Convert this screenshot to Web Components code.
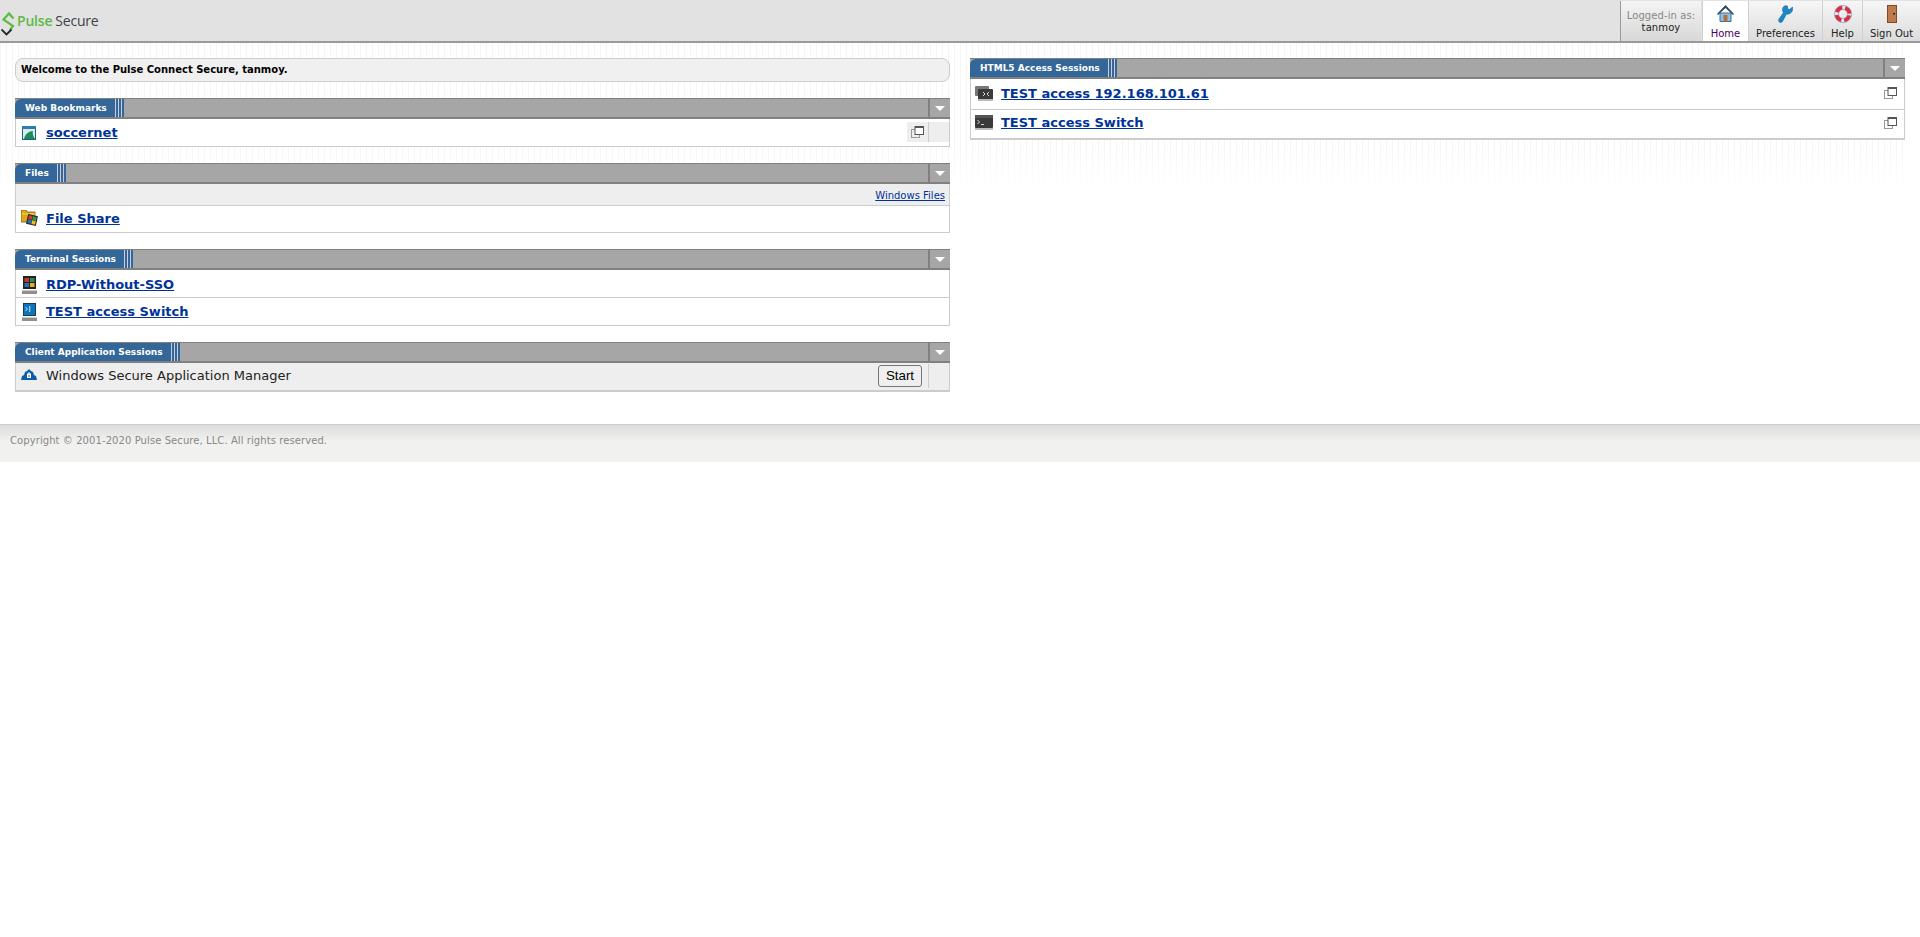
<!DOCTYPE html>
<html>
<head>
<meta charset="utf-8">
<title>Pulse Connect Secure</title>
<style>
  html, body { margin: 0; padding: 0; background: #fff; }
  body { font-family: "DejaVu Sans", Verdana, sans-serif; }
</style>
</head>
<body>
<ps-header user="tanmoy"></ps-header>
<ps-main>
  <div slot="left">
    <ps-welcome>Welcome to the Pulse Connect Secure, tanmoy.</ps-welcome>
    <ps-panel title="Web Bookmarks">
      <ps-row icon="web" label="soccernet" copy="cell" lift="0"></ps-row>
    </ps-panel>
    <ps-panel title="Files">
      <ps-subrow>Windows Files</ps-subrow>
      <ps-row icon="folder" label="File Share" height="27" lift="2"></ps-row>
    </ps-panel>
    <ps-panel title="Terminal Sessions">
      <ps-row icon="rdp" label="RDP-Without-SSO" lift="-2"></ps-row>
      <ps-row icon="term" label="TEST access Switch" lift="0"></ps-row>
    </ps-panel>
    <ps-panel title="Client Application Sessions" thick>
      <ps-app-row icon="wsam" label="Windows Secure Application Manager"></ps-app-row>
    </ps-panel>
  </div>
  <div slot="right">
    <ps-panel title="HTML5 Access Sessions" thick>
      <ps-row icon="vnc" label="TEST access 192.168.101.61" copy="plain" height="31" lift="2"></ps-row>
      <ps-row icon="shell" label="TEST access Switch" copy="plain" height="29" lift="4"></ps-row>
    </ps-panel>
  </div>
</ps-main>
<ps-footer>Copyright © 2001-2020 Pulse Secure, LLC. All rights reserved.</ps-footer>

<script>
// small inline drawings, keyed by name
const ICONS = {
  web: `<svg width="14" height="14" viewBox="0 0 14 14"><rect width="14" height="14" fill="#1f5f7f"/><rect width="14" height="3" fill="#2a7fb0"/><rect x="1" y="3" width="12" height="10" fill="#d8ecf0"/><path d="M2 13c1-5 5-8 9-8-1 3 1 6 2 8z" fill="#1e8a5a"/></svg>`,
  folder: `<svg width="17" height="16" viewBox="0 0 17 16"><path d="M0 0h5l1 2h8v10H2L0 12z" fill="#e0a818" stroke="#7a5a10" stroke-width=".8"/><path d="M1 4h13" stroke="#f4d870"/><g transform="rotate(12 11 10)"><rect x="6" y="5" width="10" height="10" fill="#222"/><rect x="7" y="6" width="3.800" height="3.800" fill="#c8402a"/><rect x="11.200" y="6" width="3.800" height="3.800" fill="#2c9a50"/><rect x="7" y="10.200" width="3.800" height="3.800" fill="#2a70c0"/><rect x="11.200" y="10.200" width="3.800" height="3.800" fill="#e8c020"/></g></svg>`,
  rdp: `<svg width="15" height="18" viewBox="0 0 15 18"><rect x="1" y="0" width="13" height="13" fill="#222"/><rect x="2.500" y="2" width="4.500" height="4" fill="#c03a2a"/><rect x="8" y="2" width="4.500" height="4" fill="#2c8a50"/><rect x="2.500" y="7" width="4.500" height="4" fill="#2a70b0"/><rect x="8" y="7" width="4.500" height="4" fill="#e0b020"/><rect x="0" y="14" width="15" height="4" fill="#8f8f8f"/><rect x="0" y="14" width="15" height="1" fill="#ccc"/></svg>`,
  term: `<svg width="15" height="18" viewBox="0 0 15 18"><rect x="1" y="0" width="13" height="13" fill="#1a3a50"/><rect x="2" y="1" width="11" height="11" fill="#0d74c0"/><path d="M3.500 4l2 2-2 2M7 3.500h.8v5H7" fill="none" stroke="#fff" stroke-width=".8"/><rect x="0" y="14" width="15" height="4" fill="#8f8f8f"/><rect x="0" y="14" width="15" height="1" fill="#ccc"/></svg>`,
  wsam: `<svg width="16" height="11" viewBox="0 0 16 11"><path d="M0 11l1-4 2-1 1-3 2-1 2-2 2 2 2 1 1 3 2 1 1 4z" fill="#0d5ea8"/><rect x="6" y="5" width="4" height="4" fill="#fff"/><path d="M7 5V4h2v1" fill="none" stroke="#fff"/><rect x="7.500" y="6" width="1" height="2" fill="#0d5ea8"/></svg>`,
  vnc: `<svg width="18" height="15" viewBox="0 0 18 15"><rect x="0" y="0" width="14" height="10" rx="1" fill="#777"/><rect x="3" y="3" width="15" height="11" rx="1" fill="#3a3a3a"/><rect x="3" y="13" width="15" height="2" fill="#bbb"/><path d="M8 10l2-2-2-2M14 6l-2 2 2 2" fill="none" stroke="#fff" stroke-width=".8"/></svg>`,
  shell: `<svg width="18" height="15" viewBox="0 0 18 15"><rect width="18" height="13" rx="1" fill="#3a3a3a"/><rect width="18" height="3" fill="#555"/><rect y="13" width="18" height="2" fill="#bbb"/><path d="M2.500 5l2 2-2 2M6 9.500h3" fill="none" stroke="#fff" stroke-width=".8"/></svg>`,
  copy: `<svg width="13" height="12" viewBox="0 0 13 12"><rect x=".5" y="3.500" width="8" height="8" fill="none" stroke="#999"/><rect x="4" y=".5" width="8.500" height="8" fill="#fff" stroke="#555"/><rect x="4" y="0" width="9" height="2" fill="#555"/></svg>`,
  home: `<svg width="17" height="17" viewBox="0 0 17 17"><path d="M3 8h11v8.500H3z" fill="#8fc0e4" stroke="#38709c"/><rect x="6.500" y="10" width="4" height="6.500" fill="#b86e38"/><path d="M0 9l8.500-9L17 9l-1 1-7.500-7L1 10z" fill="#2d4a62"/></svg>`,
  prefs: `<svg width="15" height="18" viewBox="0 0 15 18"><path d="M14.500 2l-3 2.500-2-1V1c-3-1-5 1-5 3.500 0 1 0 2 1 3L1 14c-1 2 0 3.500 1.500 3.500 1 0 2-.5 2.500-2l3.500-6.500c3.500 1 7-2.500 6-7z" fill="#1b86c8" stroke="#0f5f96" stroke-width=".5"/></svg>`,
  help: `<svg width="18" height="18" viewBox="0 0 18 18"><circle cx="9" cy="9" r="6.500" fill="none" stroke="#e4e6f2" stroke-width="4"/><circle cx="9" cy="9" r="6.500" fill="none" stroke="#dc2e3c" stroke-width="4" stroke-dasharray="7.200 3" stroke-dashoffset="-1.500"/><circle cx="9" cy="9" r="8.600" fill="none" stroke="#8f9ac0" stroke-width=".7"/><circle cx="9" cy="9" r="4.400" fill="none" stroke="#8f9ac0" stroke-width=".7"/></svg>`,
  door: `<svg width="10" height="18" viewBox="0 0 10 18"><rect x=".5" y=".5" width="9" height="17" fill="#bd7a4c" stroke="#7f4a28"/><rect x="6" y="8" width="2" height="1.500" fill="#222"/></svg>`
};

class PsHeader extends HTMLElement {
  constructor() {
    super();
    this.attachShadow({ mode: 'open' });
    this.shadowRoot.innerHTML = `
      <style>
        :host { display: flex; justify-content: space-between; height: 41px; background: #e2e2e2; border-bottom: 2px solid #999; font-family: "DejaVu Sans", Verdana, sans-serif; }
        .logo { display: flex; align-items: center; padding-left: 1px; gap: 2px; font-family: "Open Sans", sans-serif; font-size: 14px; letter-spacing: -.2px; }
        .logo b { font-weight: 600; color: #5fb946; margin-right: 3px; }
        .logo span { color: #3c4448; }
        nav { display: flex; }
        .who { width: 81px; margin: 1px 1px 0 0; padding-top: 9px; box-sizing: border-box; border-left: 1px solid #999; background: linear-gradient(#f4f4f4, #d8d8d8); text-align: center; font-size: 10px; line-height: 12px; letter-spacing: .1px; color: #888; }
        .who div { color: #222; }
      </style>
      <div class="logo">
        <svg width="14" height="33" viewBox="0 0 14 33"><path d="M12.500 14.500L8 9.500 2.500 15.500 12 22l-3 4" fill="none" stroke="#5fb946" stroke-width="2.200"/><path d="M.5 25.500l5 5 5-5" fill="none" stroke="#22282c" stroke-width="1.800"/></svg>
        <div><b>Pulse</b><span>Secure</span></div>
      </div>
      <nav>
        <div class="who">Logged-in as:<div>${this.getAttribute('user')}</div></div>
        <ps-nav-item icon="home" width="46" active>Home</ps-nav-item>
        <ps-nav-item icon="prefs" width="74">Preferences</ps-nav-item>
        <ps-nav-item icon="help" width="40">Help</ps-nav-item>
        <ps-nav-item icon="door" width="58">Sign Out</ps-nav-item>
      </nav>`;
  }
}

class PsNavItem extends HTMLElement {
  constructor() {
    super();
    this.attachShadow({ mode: 'open' });
    const bg = this.hasAttribute('active') ? '#fff' : 'linear-gradient(#f6f6f6, #dcdcdc)';
    const color = this.hasAttribute('active') ? '#4a0060' : '#222';
    this.shadowRoot.innerHTML = `
      <style>
        :host { display: flex; flex-direction: column; align-items: center; box-sizing: border-box; width: ${this.getAttribute('width')}px; margin-top: 1px; border-left: 1px solid #d0d0d0; background: ${bg}; color: ${color}; font-size: 10px; white-space: nowrap; }
        .i { height: 26px; display: flex; align-items: center; padding: 0 0 3px; box-sizing: border-box; margin-top: 1px; margin-bottom: -1px; }
        .t { line-height: 13px; }
      </style>
      <div class="i">${ICONS[this.getAttribute('icon')]}</div>
      <div class="t"><slot></slot></div>`;
  }
}

class PsMain extends HTMLElement {
  constructor() {
    super();
    this.attachShadow({ mode: 'open' });
    this.shadowRoot.innerHTML = `
      <style>
        :host { display: block; position: relative; height: 381px; box-sizing: border-box; padding: 15px 15px 0 15px; }
        .stripes { position: absolute; left: 0; top: 0; width: 1908px; height: 147px; background: repeating-linear-gradient(90deg, #f5f5f5 0 1px, #fff 1px 6px); -webkit-mask-image: linear-gradient(#000 70%, transparent); mask-image: linear-gradient(#000 70%, transparent); }
        .cols { position: relative; display: grid; grid-template-columns: 935px 935px; column-gap: 20px; }
      </style>
      <div class="stripes"></div>
      <div class="cols">
        <div><slot name="left"></slot></div>
        <div><slot name="right"></slot></div>
      </div>`;
  }
}

class PsWelcome extends HTMLElement {
  constructor() {
    super();
    this.attachShadow({ mode: 'open' });
    this.shadowRoot.innerHTML = `
      <style>
        :host { display: block; box-sizing: border-box; height: 24px; line-height: 22px; padding-left: 5px; margin-bottom: 16px; background: #f0f0f0; border: 1px solid #ccc; border-radius: 8px; font-size: 10px; font-weight: bold; color: #000; }
      </style>
      <slot></slot>`;
  }
}

class PsPanel extends HTMLElement {
  constructor() {
    super();
    this.attachShadow({ mode: 'open' });
    this.shadowRoot.innerHTML = `
      <style>
        :host { display: block; margin-bottom: 16px; }
        .head { display: flex; height: 21px; box-sizing: border-box; background: #a6a6a6; border-top: 1px solid #808080; border-bottom: 2px solid #808080; }
        .tab { background: #336699; color: #fff; font-size: 9px; font-weight: bold; line-height: 18px; padding: 0 8px 0 10px; border-top-left-radius: 6px; white-space: nowrap; }
        .bars { width: 10px; background: linear-gradient(90deg, #ccd 0 1px, #336699 1px 3px, #ccd 3px 4px, #336699 4px 6px, #ccd 6px 7px, #336699 7px 9px, #a6a6a6 9px); }
        .fill { flex: 1; }
        .drop { width: 20px; border-left: 2px solid #808080; display: flex; align-items: center; justify-content: center; }
        .drop i { width: 0; height: 0; border-left: 5px solid transparent; border-right: 5px solid transparent; border-top: 5px solid #fff; }
        .body { border: 1px solid #ccc; border-top: 0; border-bottom: ${this.hasAttribute('thick') ? '1px solid #ccc' : '0'}; }
      </style>
      <div class="head">
        <div class="tab">${this.getAttribute('title')}</div>
        <div class="bars"></div>
        <div class="fill"></div>
        <div class="drop"><i></i></div>
      </div>
      <div class="body"><slot></slot></div>`;
  }
}

class PsRow extends HTMLElement {
  constructor() {
    super();
    this.attachShadow({ mode: 'open' });
    const copy = this.getAttribute('copy');
    const height = this.getAttribute('height') || 28;
    // lift > 0 moves the content up by half of it, < 0 moves it down
    const lift = parseInt(this.getAttribute('lift') || '2', 10);
    const shift = lift >= 0 ? `margin-bottom: ${lift}px;` : `margin-top: ${-lift}px;`;
    let right = '';
    if (copy === 'cell') right = `<div class="copy cell">${ICONS.copy}</div><div class="end"></div>`;
    if (copy === 'plain') right = `<div class="copy plain">${ICONS.copy}</div>`;
    this.shadowRoot.innerHTML = `
      <style>
        :host { display: flex; height: ${height}px; box-sizing: border-box; align-items: center; border-bottom: 1px solid #ccc; background: #fff; }
        .icon { width: 26px; margin-right: 4px; ${shift} display: flex; align-items: center; justify-content: center; flex: none; }
        a { flex: 1; font-size: 13px; font-weight: bold; color: #003399; text-decoration: underline; white-space: nowrap; ${shift} }
        .copy { display: flex; align-items: center; justify-content: center; }
        .cell { box-sizing: border-box; width: 22px; height: 20px; background: #eee; border-right: 1px solid #ccc; margin-bottom: 2px; }
        .end { width: 20px; height: 20px; background: #eee; margin-bottom: 2px; }
        .plain { width: 28px; margin-bottom: 2px; }
      </style>
      <div class="icon">${ICONS[this.getAttribute('icon')]}</div>
      <a href="#">${this.getAttribute('label')}</a>
      ${right}`;
  }
}

class PsSubrow extends HTMLElement {
  constructor() {
    super();
    this.attachShadow({ mode: 'open' });
    this.shadowRoot.innerHTML = `
      <style>
        :host { display: block; height: 22px; box-sizing: border-box; background: #eee; border-bottom: 1px solid #ccc; text-align: right; padding: 5px 4px 0 0; font-size: 10px; line-height: 14px; }
        a { color: #003399; }
      </style>
      <a href="#"><slot></slot></a>`;
  }
}

class PsAppRow extends HTMLElement {
  constructor() {
    super();
    this.attachShadow({ mode: 'open' });
    this.shadowRoot.innerHTML = `
      <style>
        :host { display: flex; height: 28px; box-sizing: border-box; align-items: center; background: #eee; border-bottom: 1px solid #ccc; }
        .icon { width: 26px; margin-right: 4px; margin-bottom: 4px; display: flex; justify-content: center; flex: none; }
        .label { flex: 1; font-size: 13px; color: #222; margin-bottom: 2px; }
        button { font: 13.33px "Liberation Sans", Arial, sans-serif; height: 22px; width: 44px; padding: 0; margin: 0 6px 2px 0; background: #efefef; border: 1px solid #767676; border-radius: 3px; color: #000; }
        .end { width: 20px; height: 24px; margin-bottom: 2px; border-left: 1px solid #ccc; }
      </style>
      <div class="icon">${ICONS[this.getAttribute('icon')]}</div>
      <div class="label">${this.getAttribute('label')}</div>
      <button>Start</button>
      <div class="end"></div>`;
  }
}

class PsFooter extends HTMLElement {
  constructor() {
    super();
    this.attachShadow({ mode: 'open' });
    this.shadowRoot.innerHTML = `
      <style>
        :host { display: block; height: 38px; box-sizing: border-box; padding: 9px 0 0 10px; border-top: 1px solid #ccc; background: linear-gradient(#dcdcdc, #f1f1ef 16px); font-size: 10px; line-height: 14px; letter-spacing: .08px; color: #888; }
      </style>
      <slot></slot>`;
  }
}

customElements.define('ps-nav-item', PsNavItem);
customElements.define('ps-header', PsHeader);
customElements.define('ps-main', PsMain);
customElements.define('ps-welcome', PsWelcome);
customElements.define('ps-panel', PsPanel);
customElements.define('ps-row', PsRow);
customElements.define('ps-subrow', PsSubrow);
customElements.define('ps-app-row', PsAppRow);
customElements.define('ps-footer', PsFooter);
</script>
</body>
</html>
